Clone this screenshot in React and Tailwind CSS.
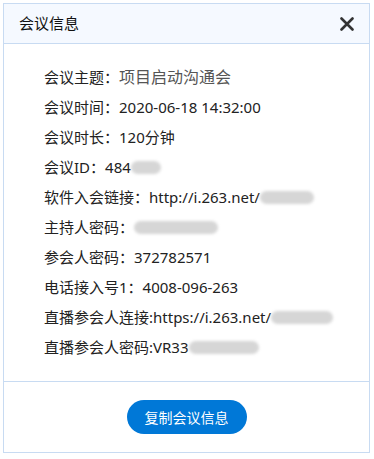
export default function App() {
  const Blur = ({ w }) => (
    <span
      className="inline-block align-middle h-[13px] rounded-full bg-[#d6d6d6] blur-[1.5px]"
      style={{ width: w }}
    />
  );
  const rows = [
    [<>会议主题：</>, <span className="text-[16px] text-[#555]">项目启动沟通会</span>],
    [<>会议时间：</>, <>2020-06-18 14:32:00</>],
    [<>会议时长：</>, <>120分钟</>],
    [<>会议ID：</>, <>484<Blur w={30} /></>],
    [<>软件入会链接：</>, <>http://i.263.net/<Blur w={54} /></>],
    [<>主持人密码：</>, <Blur w={84} />],
    [<>参会人密码：</>, <>372782571</>],
    [<>电话接入号1：</>, <>4008-096-263</>],
    [<>直播参会人连接:</>, <>https://i.263.net/<Blur w={62} /></>],
    [<>直播参会人密码:</>, <>VR33<Blur w={70} /></>],
  ];
  return (
    <div
      className="w-[374px] h-[459px] bg-white pt-[3px] pl-[3px]"
      style={{ fontFamily: '"Noto Sans", "Noto Sans CJK SC", sans-serif' }}
    >
      <div className="w-[367px] h-[450px] border border-[#c8dbf2] flex flex-col">
        <div className="h-[40px] shrink-0 bg-[#f5f9ff] border-b border-[#c8dbf2] flex items-center justify-between pl-[15px] pr-[15px]">
          <span className="text-[15px] text-[#111]">会议信息</span>
          <svg width="14" height="14" viewBox="0 0 14 14">
            <path d="M1.5 1.5 L12.5 12.5 M12.5 1.5 L1.5 12.5" stroke="#333" strokeWidth="2.6" strokeLinecap="round" />
          </svg>
        </div>
        <div className="flex-1 pt-[18px] pl-[40px] flex flex-col">
          {rows.map((r, i) => (
            <div key={i} className="h-[30px] flex items-center text-[15px] text-[#222] whitespace-nowrap">
              <span>{r[0]}</span>
              <span className="flex items-center">{r[1]}</span>
            </div>
          ))}
        </div>
        <div className="h-[71px] shrink-0 border-t border-[#c8dbf2] flex items-center justify-center">
          <button className="w-[120px] h-[34px] rounded-full bg-[#0078d7] text-white text-[14px]">
            复制会议信息
          </button>
        </div>
      </div>
    </div>
  );
}
